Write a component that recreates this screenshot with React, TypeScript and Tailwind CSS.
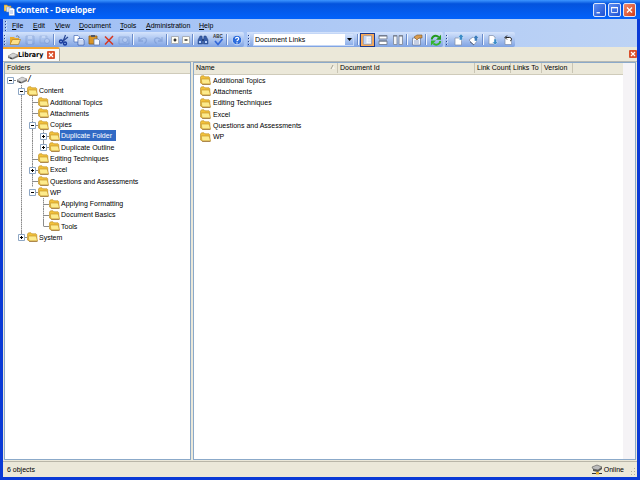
import { useState } from "react";
import type { ReactNode } from "react";
import clsx from "clsx";

const App = () => {
  return (
    <div className="min-h-screen flex flex-col bg-[#0a3ad6] font-['Liberation_Sans',sans-serif] text-[7px] leading-[11px] text-black cursor-default select-none">
      <TitleBar />
      <div className="flex-1 flex flex-col mx-[3px] mb-[3px] bg-[#ebe8d9]">
        <div className="bg-linear-to-r from-[#9ebef5] to-[#bdd3f5]">
          <MenuBar />
          <ToolBars />
        </div>
        <TabStrip />
        <main className="flex-1 flex gap-[2px] px-[1px]">
          <FolderPanel />
          <ObjectList />
        </main>
        <StatusBar />
      </div>
    </div>
  );
};

const TitleBar = () => (
  <header className="h-[19px] flex items-center pl-[4px] pr-[4px] bg-linear-to-b from-[#3d95ff] from-0% via-[#0453dd] via-20% to-[#0262fb]">
    <svg className="w-[11px] h-[12px]" viewBox="0 0 11 12">
      <path d="M0 1h3l1 1h3v5H0z" fill="#f5cf62" stroke="#b98e22" strokeWidth=".6" />
      <path d="M2.500 3h3.500v5H2.500z" fill="#dfe9fb" stroke="#7f97c6" strokeWidth=".5" />
      <path d="M5 4h4l1.500 1.500V11.500H5z" fill="#fff" stroke="#8798b8" strokeWidth=".5" />
      <path d="M6 7h3M6 9h3" stroke="#6f94d8" strokeWidth=".7" />
    </svg>
    <h1 className="flex-1 pl-[1px] font-['Open_Sans',sans-serif] font-bold text-[8px] leading-[12px] text-white">
      Content - Developer
    </h1>
    <div className="flex gap-[2px] pt-[1px]">
      <CaptionButton label="Minimize">
        <path d="M3 9h4v1.500H3z" fill="#fff" />
      </CaptionButton>
      <CaptionButton label="Maximize">
        <path d="M3 3.500h7v6H3z" fill="none" stroke="#fff" />
        <path d="M2.500 3h8v1.500h-8z" fill="#fff" />
      </CaptionButton>
      <CaptionButton label="Close" danger>
        <path d="M3.500 3.500l6 6M9.500 3.500l-6 6" stroke="#fff" strokeWidth="1.500" />
      </CaptionButton>
    </div>
  </header>
);

const CaptionButton = ({ label, danger, children }: { label: string; danger?: boolean; children: ReactNode }) => (
  <button
    aria-label={label}
    className={clsx(
      "w-[13px] h-[14px] flex items-center justify-center rounded-[2px] border border-[#dce7fb] bg-linear-to-br",
      danger ? "from-[#f08a6a] to-[#cf3a13]" : "from-[#5c8df2] to-[#1c4fd2]"
    )}
  >
    <svg className="w-[11px] h-[12px]" viewBox="0 0 13 13">{children}</svg>
  </button>
);

const Grip = () => (
  <svg className="w-[4px] h-[10px] shrink-0" viewBox="0 0 4 10">
    {[0, 3, 6, 9].map((y) => (
      <g key={y}>
        <path d={`M2 ${y + 0.5}h1v1H2z`} fill="#fff" />
        <path d={`M1 ${y}h1v1H1z`} fill="#27418c" />
      </g>
    ))}
  </svg>
);

const MenuBar = () => (
  <nav className="h-[13px] flex items-center pl-[1px]">
    <Grip />
    <div className="flex pl-[1px]">
      {menus.map((m) => (
        <button key={m.label} className={clsx("text-left pl-[3px]", m.width)}>
          <span className="underline">{m.label[0]}</span>
          {m.label.slice(1)}
        </button>
      ))}
    </div>
  </nav>
);

const Group = ({ children }: { children: ReactNode }) => (
  <div className="h-[15px] flex items-center rounded-r-[2px] bg-linear-to-b from-[#d5e4fc] to-[#7fa2e2]">{children}</div>
);

const Sep = () => (
  <div className="w-[4px] h-[11px] shrink-0 flex justify-center">
    <div className="w-[1px] bg-[#6a8ccb]" />
    <div className="w-[1px] bg-[#f1f6ff]" />
  </div>
);

const Tool = ({ label, small, off, active, children }: { label: string; small?: boolean; off?: boolean; active?: boolean; children: ReactNode }) => (
  <button
    aria-label={label}
    disabled={off}
    className={clsx(
      "h-[14px] shrink-0 flex items-center justify-center",
      small ? "w-[11px]" : "w-[15px]",
      active && "border border-[#1a3a8f] bg-[#f9a956]"
    )}
  >
    <svg className={clsx("h-[12px] shrink-0", active ? "w-[11px]" : "w-[12px]", off && "opacity-30")} viewBox="0 0 12 12" fill="none">
      {children}
    </svg>
  </button>
);

const ToolBars = () => (
  <div className="h-[15px] flex items-center">
    <Group>
      <Grip />
      <Tool label="Open">
        <path d="M1 3h4l1 1h4v6H1z" fill="#e8ab2e" />
        <path d="M1 10.500L3.500 5.500H11.500L9.500 10.500z" fill="#fde08a" stroke="#a87412" strokeWidth=".6" />
        <path d="M7 2.500c2-1.500 3 0 3 1.500" stroke="#54627d" strokeWidth=".8" />
      </Tool>
      <Tool label="Save" off>
        <path d="M2 2h8v8H2z" fill="#8fabdc" stroke="#5a78b4" />
        <path d="M4 2h4v3H4zM4 7h4v3H4z" fill="#dfe9fb" />
      </Tool>
      <Tool label="Save All" off>
        <path d="M1 2h7v7H1z" fill="#a5bde6" stroke="#5a78b4" strokeWidth=".7" />
        <path d="M3 2h3v2H3z" fill="#e5edfb" />
        <circle cx="8" cy="7" r="2.500" fill="#dfe9fb" stroke="#5a78b4" />
      </Tool>
      <Sep />
      <Tool label="Cut">
        <path d="M7.500 1L5 7.500M10 3L4.500 7.500" stroke="#2a4794" strokeWidth="1.200" />
        <circle cx="3" cy="7.500" r="1.500" stroke="#173a9c" strokeWidth="1.400" />
        <circle cx="7" cy="9.500" r="1.500" stroke="#173a9c" strokeWidth="1.400" />
      </Tool>
      <Tool label="Copy">
        <path d="M1 1.500h4l1.500 1.500v5H1z" fill="#fff" stroke="#5476bd" strokeWidth=".8" />
        <path d="M5 4.500h4.500l1.500 1.500v5H5z" fill="#eef4ff" stroke="#3e61ad" strokeWidth=".8" />
        <path d="M6 7h4M6 9h4" stroke="#83a2dc" strokeWidth=".7" />
      </Tool>
      <Tool label="Paste">
        <path d="M1 2h8v8H1z" fill="#d99526" stroke="#8d5b15" strokeWidth=".8" />
        <path d="M3 1h4v2H3z" fill="#4f5668" />
        <path d="M6 5h4l1.500 1.500V11H6z" fill="#f5f8ff" stroke="#56709f" strokeWidth=".7" />
      </Tool>
      <Tool label="Delete">
        <path d="M2 2.500l8 8M10 2L2 10.500" stroke="#d8351d" strokeWidth="1.500" />
      </Tool>
      <Tool label="Snapshot" off>
        <path d="M1 3h10v7H1z" fill="#9fbbe8" stroke="#4d70b4" />
        <circle cx="7" cy="6" r="2.500" fill="#e0eafd" stroke="#4d70b4" />
      </Tool>
      <Sep />
      <Tool label="Undo" off>
        <path d="M2 3v4h4M2.500 6.500C5 3 9 3 9.500 6c0 2-1 3-2 3.500" stroke="#4d70b4" strokeWidth="1.300" />
      </Tool>
      <Tool label="Redo" off>
        <path d="M10 3v4H6M9.500 6.500C7 3 3 3 2.500 6c0 2 1 3 2 3.500" stroke="#4d70b4" strokeWidth="1.300" />
      </Tool>
      <Sep />
      <Tool label="Expand" small>
        <path d="M2.500 2.500h7v7h-7z" fill="#fffdf2" stroke="#a9afb8" />
        <path d="M4.500 6h3M6 4.500v3" stroke="#000" strokeWidth="1.200" />
      </Tool>
      <Tool label="Collapse" small>
        <path d="M2.500 2.500h7v7h-7z" fill="#fffdf2" stroke="#a9afb8" />
        <path d="M4.500 6h3" stroke="#000" strokeWidth="1.200" />
      </Tool>
      <Sep />
      <Tool label="Find">
        <path d="M3 2h2l.5 4V10H1V6zM7 2h2l2 4v4H6.500V6z" fill="#365da9" stroke="#28447f" strokeWidth=".5" />
        <path d="M5 5h2v2H5z" fill="#28447f" />
        <path d="M2 7h2v2H2zM8 7h2v2H8z" fill="#b7d0fa" />
      </Tool>
      <Tool label="Spelling">
        <text x="1" y="4" fontSize="4.500" fontWeight="700" fill="#333">ABC</text>
        <path d="M3 7l3 3.500L10.500 5" stroke="#3267d8" strokeWidth="1.700" />
      </Tool>
      <Sep />
      <Tool label="Help">
        <circle cx="6" cy="6" r="4.800" fill="#2b6bdc" stroke="#cbdcf7" />
        <path d="M4.500 4.800c0-2 3.200-2 3.200 0C7.700 6 6 6 6 7.200M6 8.200v1.200" stroke="#fff" strokeWidth="1.200" />
      </Tool>
    </Group>
    <div className="w-[3px]" />
    <Group>
      <Grip />
      <div className="relative mx-[2px]">
        <select
          aria-label="Pane"
          className="block appearance-none w-[101px] h-[13px] pl-[1px] bg-white border border-[#c4d7f7] text-[7px] leading-[11px]"
        >
          <option>Document Links</option>
        </select>
        <div className="absolute right-[1px] top-[1px] w-[8px] h-[11px] flex items-center justify-center bg-linear-to-b from-[#d5e4fc] to-[#8caee9] pointer-events-none">
          <svg className="w-[5px] h-[3px]" viewBox="0 0 5 3"><path d="M0 0h5L2.500 3z" fill="#000" /></svg>
        </div>
      </div>
      <Sep />
      <Tool label="Outline View" active>
        <path d="M1.500 1.500h9v9h-9z" fill="#fff" stroke="#8294b8" />
        <path d="M2 2h3v8H2z" fill="#c3d5f4" />
        <path d="M6 4h4M6 6h4M6 8h4" stroke="#b3c5e8" strokeWidth=".7" />
      </Tool>
      <Tool label="Split Horizontally">
        <path d="M2 1.500h8v3.500H2zM2 7h8v3.500H2z" fill="#fff" stroke="#7c8699" />
        <path d="M2 2h8M2 7h8" stroke="#6a7487" />
      </Tool>
      <Tool label="Split Vertically">
        <path d="M1.500 1.500h3.500v9H1.500zM7 1.500h3.500v9H7z" fill="#f0f3f7" stroke="#8a93a4" />
        <path d="M1 2h4M7 2h4" stroke="#6a7487" />
      </Tool>
      <Sep />
      <Tool label="Properties">
        <path d="M1.500 4h8v7h-8z" fill="#f3f6fc" stroke="#6e7e9e" strokeWidth=".8" />
        <path d="M3 7h5M3 9h5" stroke="#7f93be" strokeWidth=".8" />
        <path d="M3 3l3-2h5v3H8L6 6z" fill="#d99b4e" stroke="#805726" strokeWidth=".6" />
      </Tool>
      <Sep />
      <Tool label="Refresh">
        <path d="M1.800 5.500C2 2 6 .5 8.700 3" stroke="#239a1e" strokeWidth="1.900" />
        <path d="M11 .8v5H6z" fill="#239a1e" />
        <path d="M10.200 7C10 10.500 6 11.800 3.300 9.500" stroke="#33b52b" strokeWidth="1.900" />
        <path d="M1 11.500v-5h5z" fill="#33b52b" />
      </Tool>
    </Group>
    <div className="w-[2px]" />
    <Group>
      <Grip />
      <div className="w-[2px]" />
      <Tool label="Check In">
        <path d="M2 4h5l1.500 1.500V11H2z" fill="#fff" stroke="#7e8ca8" strokeWidth=".7" />
        <path d="M8 0l3 3H9.500v3h-3V3H5z" fill="#3c8cc8" stroke="#e7f2fc" strokeWidth=".4" />
      </Tool>
      <Tool label="Check In All">
        <path d="M1 6l4-3 4 4-3 4z" fill="#fff" stroke="#7e8ca8" strokeWidth=".8" />
        <path d="M8 1l3 3H9.500v3h-3V4H5z" fill="#3c7cbc" stroke="#e7f2fc" strokeWidth=".4" />
        <path d="M2 8l4 3" stroke="#5e6980" />
      </Tool>
      <Sep />
      <Tool label="Check Out">
        <path d="M2 1.500h4l2 1.500v7H2z" fill="#fff" stroke="#7e8ca8" strokeWidth=".7" />
        <path d="M8 11L5.500 8H7V5h2.500v3H11z" fill="#3c8cc8" stroke="#e7f2fc" strokeWidth=".4" />
      </Tool>
      <Tool label="Undo Check Out">
        <path d="M3 3h5l1.500 1.500V10.500H3z" fill="#fff" stroke="#7e8ca8" strokeWidth=".7" />
        <path d="M5 1.500L3 3.500l2 2M3.500 3.500H7.500c2.500 0 2.500 3 .5 3.500" stroke="#222" />
      </Tool>
    </Group>
  </div>
);

const CloseBox = ({ label }: { label: string }) => (
  <button aria-label={label} className="w-[8px] h-[8px] shrink-0 rounded-[1px] bg-[#d9502c]">
    <svg className="w-[8px] h-[8px]" viewBox="0 0 8 8">
      <path d="M2 2l4 4M6 2L2 6" stroke="#fff" strokeWidth="1.200" />
    </svg>
  </button>
);

const TabStrip = () => (
  <div className="h-[15px] flex items-center justify-between border-b border-[#b5b8b4]">
    <div className="h-[14px] w-[57px] flex items-center pl-[4px] rounded-tr-[2px] bg-[#fbfaf7] border-t-2 border-r border-t-[#f5a62f] border-r-[#aca899]">
      <DriveIcon />
      <a href="#library" className="flex-1 font-['DejaVu_Sans_Condensed','DejaVu_Sans',sans-serif] font-bold">Library</a>
      <div className="pr-[4px] flex"><CloseBox label="Close Library" /></div>
    </div>
    <CloseBox label="Close pane" />
  </div>
);

const DriveIcon = () => (
  <svg className="w-[11px] h-[9px] shrink-0" viewBox="0 0 11 9">
    <path d="M1 5l5-3 5 2v2L5.500 8.500 1 7z" fill="#777" />
    <path d="M1 5l5-3 5 2-5.500 3z" fill="#d3d3d3" stroke="#888" strokeWidth=".4" />
    <path d="M3 7l2 .8" stroke="#333" />
  </svg>
);

const FolderIcon = () => (
  <svg className="w-[11px] h-[10px] shrink-0" viewBox="0 0 11 10">
    <path d="M.5 2l1-1.200H4l1 1h4l.8 1v6H2L.5 8z" fill="#f1c13b" stroke="#b88a24" strokeWidth=".6" />
    <path d="M2 9L1.200 4h8l1.300 5z" fill="#fdeb8c" stroke="#c08c22" strokeWidth=".6" />
    <path d="M2.200 9.400h8.300" stroke="#8c601a" strokeWidth=".7" />
  </svg>
);

const FolderPanel = () => {
  const [selected, setSelected] = useState("Duplicate Folder");

  return (
    <section className="w-[187px] shrink-0 flex flex-col bg-white border border-[#8ba9c9]">
      <h2 className="h-[11px] pl-[2px] leading-[10px] bg-[#ebe8d9] border-b border-[#cfcbba]">Folders</h2>
      <ul role="tree" className="h-[169px] flex flex-col">
        {tree.map((node) => (
          <li key={node.name} role="treeitem" aria-selected={selected === node.name} className="flex-1 min-h-0 flex items-center">
            {[...node.guides].map((g, i) => (
              <Guide key={i} kind={g} />
            ))}
            {node.name === "/" ? <DriveIcon /> : <FolderIcon />}
            <button
              onClick={() => setSelected(node.name)}
              className={clsx(
                "px-[1px] h-[11px]",
                selected === node.name && "bg-[#316ac5] text-white pr-[4px]",
                node.name === "/" && "text-[9px] italic"
              )}
            >
              {node.name}
            </button>
          </li>
        ))}
      </ul>
    </section>
  );
};

// " " blank, "|" line through, "t" branch, "l" last branch, "+" / "-" toggles ("P" / "M" when the line goes on below)
const Guide = ({ kind }: { kind: string }) => {
  const toggle = "+-PM".includes(kind);
  const plus = kind === "+" || kind === "P";
  return (
    <svg className="w-[11px] h-[12px] shrink-0" viewBox="0 0 11 12" fill="none">
      {"|tPM".includes(kind) && <path d="M5.500 0v12" stroke="#8c8c8c" strokeDasharray="1.500 .5" />}
      {"l+".includes(kind) && <path d="M5.500 0v6" stroke="#8c8c8c" />}
      {kind !== "|" && kind !== " " && <path d="M5.500 6.500H11" stroke="#8c8c8c" />}
      {toggle && <path d="M2.500 3.500h6v6h-6z" fill="#fff" stroke="#8da6c4" />}
      {toggle && <path d="M4 6.500h3" stroke="#000" />}
      {plus && <path d="M5.500 5v3" stroke="#000" />}
    </svg>
  );
};

const ObjectList = () => (
  <section className="flex-1 flex bg-white border border-[#8ba9c9]">
    <div className="flex-1">
      <table className="w-full table-fixed border-collapse">
        <thead>
          <tr className="h-[11px] bg-[#ebe8d9] border-b border-[#cfcbba]">
            {columns.map((c) => (
              <th key={c.label} className={clsx("p-0 font-normal text-left leading-[10px]", c.width)}>
                <div className="flex justify-between pl-[2px] border-r border-[#c9c5b4] whitespace-nowrap">
                  {c.label}
                  {c.sorted && (
                    <svg className="w-[6px] h-[8px] mr-[1px]" viewBox="0 0 6 8">
                      <path d="M1 6l2-4 2 4z" fill="#f7f5ec" />
                      <path d="M1 6l2-4" stroke="#8d8a7c" strokeWidth=".8" />
                    </svg>
                  )}
                </div>
              </th>
            ))}
            <th className="p-0" />
          </tr>
        </thead>
      </table>
      <ul className="h-[68px] flex flex-col pl-[6px]">
        {objects.map((name) => (
          <li key={name} className="flex-1 min-h-0 flex items-center">
            <FolderIcon />
            <span className="pl-[2px]">{name}</span>
          </li>
        ))}
      </ul>
    </div>
    <div className="w-[12px] bg-[#f5f3f6]" />
  </section>
);

const StatusBar = () => (
  <footer className="h-[16px] mt-[1px] flex items-center justify-between pl-[4px] border-t border-[#b9b6a8]">
    <span>6 objects</span>
    <div className="flex items-center">
      <svg className="w-[12px] h-[11px]" viewBox="0 0 12 11">
        <path d="M1 3l5-2 5 2-4 3-5-1z" fill="#bcbcbc" stroke="#555" strokeWidth=".6" />
        <path d="M2 5l5 1 4-3v2L7 8 2 7z" fill="#555" />
        <path d="M1 9.500h10" stroke="#333" />
        <path d="M5 8h3v2.500H5z" fill="#e4ad2e" />
      </svg>
      <span className="pl-[1px]">Online</span>
      <svg className="w-[8px] h-[9px] ml-[5px] mt-[4px]" viewBox="0 0 8 9">
        <path d="M5 1h1v1H5zM5 4h1v1H5zM2 4h1v1H2zM5 7h1v1H5zM2 7h1v1H2z" fill="#b0ac9b" />
      </svg>
    </div>
  </footer>
);

export default App;

type TreeNode = {
  name: string;
  guides: string;
};

const tree: TreeNode[] = [
  { name: "/", guides: "-" },
  { name: "Content", guides: " M" },
  { name: "Additional Topics", guides: " |t" },
  { name: "Attachments", guides: " |t" },
  { name: "Copies", guides: " |M" },
  { name: "Duplicate Folder", guides: " ||P" },
  { name: "Duplicate Outline", guides: " ||+" },
  { name: "Editing Techniques", guides: " |t" },
  { name: "Excel", guides: " |P" },
  { name: "Questions and Assessments", guides: " |t" },
  { name: "WP", guides: " |-" },
  { name: "Applying Formatting", guides: " | t" },
  { name: "Document Basics", guides: " | t" },
  { name: "Tools", guides: " | l" },
  { name: "System", guides: " +" },
];

const objects = ["Additional Topics", "Attachments", "Editing Techniques", "Excel", "Questions and Assessments", "WP"];

const menus = [
  { label: "File", width: "w-[21px]" },
  { label: "Edit", width: "w-[22px]" },
  { label: "View", width: "w-[24px]" },
  { label: "Document", width: "w-[41px]" },
  { label: "Tools", width: "w-[26px]" },
  { label: "Administration", width: "w-[53px]" },
  { label: "Help", width: "w-[21px]" },
];

const columns = [
  { label: "Name", width: "w-[144px]", sorted: true },
  { label: "Document Id", width: "w-[137px]" },
  { label: "Link Count", width: "w-[36px]" },
  { label: "Links To", width: "w-[31px]" },
  { label: "Version", width: "w-[31px]" },
];
